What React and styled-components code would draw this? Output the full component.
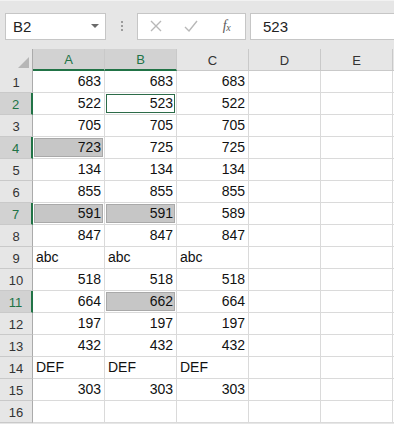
import React from "react";
import styled, { createGlobalStyle, css } from "styled-components";

const Global = createGlobalStyle`
  html, body { margin: 0; padding: 0; background: #e6e6e6; }
  body { font-family: "Liberation Sans", Arial, sans-serif; overflow: hidden; }
`;

const GREEN = "#217346";

const Page = styled.div`
  width: 394px;
  height: 424px;
  background: #e6e6e6;
  overflow: hidden;
  border-top: 1px solid #f2f2f2;
  box-sizing: border-box;
`;

const FormulaBar = styled.div`
  display: flex;
  align-items: center;
  height: 48px;
  padding: 0 0 0 5px;
  box-sizing: border-box;
  gap: 0;
`;

const NameBox = styled.div`
  width: 101px;
  height: 27px;
  margin-top: 2px;
  box-sizing: border-box;
  background: #fff;
  border: 1px solid #c6c6c6;
  display: flex;
  align-items: center;
  justify-content: space-between;
  padding: 0 6px 0 7px;
  font-size: 15px;
  color: #222;
`;

const Caret = styled.span`
  width: 0;
  height: 0;
  border-left: 4px solid transparent;
  border-right: 4px solid transparent;
  border-top: 4px solid #6a6a6a;
`;

const Dots = styled.div`
  width: 31px;
  display: flex;
  flex-direction: column;
  align-items: center;
  gap: 2px;
  margin-top: 2px;
  span {
    width: 2px;
    height: 2px;
    background: #9c9c9c;
  }
`;

const ButtonsBox = styled.div`
  width: 109px;
  height: 27px;
  margin-top: 2px;
  box-sizing: border-box;
  background: #fff;
  border: 1px solid #c6c6c6;
  display: flex;
  align-items: center;
`;

const BarButton = styled.span`
  width: ${(p) => p.$w}px;
  display: flex;
  justify-content: center;
  align-items: center;
  color: ${(p) => p.$color || "#b6b6b6"};
  font-size: 15px;
`;

const Fx = styled.span`
  font-family: "Liberation Serif", "Times New Roman", serif;
  font-style: italic;
  font-size: 14px;
  color: #5a5a5a;
  letter-spacing: -0.5px;
  sub { font-size: 10px; vertical-align: -1px; }
`;

const FormulaInput = styled.div`
  flex: 1;
  height: 27px;
  margin-top: 2px;
  margin-left: 4px;
  box-sizing: border-box;
  background: #fff;
  border: 1px solid #c6c6c6;
  border-right: none;
  display: flex;
  align-items: center;
  padding-left: 12px;
  font-size: 15px;
  color: #222;
`;

const Sheet = styled.div`
  display: grid;
  grid-template-columns: 33px repeat(5, 72px) 1fr;
  grid-auto-rows: 22px;
`;

const Corner = styled.div`
  position: relative;
  background: #e6e6e6;
  border-right: 1px solid #ababab;
  box-sizing: border-box;
  &::after {
    content: "";
    position: absolute;
    right: 3px;
    bottom: 3px;
    width: 0;
    height: 0;
    border-left: 11px solid transparent;
    border-bottom: 11px solid #b6b6b6;
  }
`;

const ColHead = styled.div`
  box-sizing: border-box;
  display: flex;
  align-items: center;
  justify-content: center;
  font-size: 13px;
  padding-top: 1px;
  border-right: 1px solid #c9c9c9;
  border-bottom: 2px solid ${(p) => (p.$sel ? GREEN : "#e6e6e6")};
  background: ${(p) => (p.$sel ? "#d2d2d2" : "#e6e6e6")};
  color: ${(p) => (p.$sel ? GREEN : "#333")};
  ${(p) => !p.$sel && css`border-bottom: 1px solid #c9c9c9;`}
`;

const RowHead = styled.div`
  box-sizing: border-box;
  display: flex;
  align-items: center;
  justify-content: center;
  font-size: 13px;
  padding-top: 1px;
  background: ${(p) => (p.$sel ? "#d2d2d2" : "#e6e6e6")};
  color: ${(p) => (p.$sel ? GREEN : "#333")};
  border-bottom: 1px solid #c9c9c9;
  border-right: ${(p) => (p.$sel ? `2px solid ${GREEN}` : "1px solid #ababab")};
`;

const Cell = styled.div`
  position: relative;
  box-sizing: border-box;
  background: #fff;
  border-right: 1px solid #dadada;
  border-bottom: 1px solid #dadada;
  display: flex;
  align-items: flex-end;
  justify-content: ${(p) => (p.$text ? "flex-start" : "flex-end")};
  padding: 0 3px 3px 3px;
  font-size: 14px;
  color: #111;
  white-space: nowrap;
  overflow: ${(p) => (p.$clip ? "hidden" : "visible")};
  z-index: 0;
  &::before {
    content: "";
    position: absolute;
    inset: 0 0 0 0;
    z-index: -1;
    ${(p) =>
      p.$hl &&
      css`
        background: #c6c6c6;
        box-shadow: inset 0 0 0 1px #a9a9a9;
        inset: 1px 1px 1px 1px;
      `}
    ${(p) =>
      p.$active &&
      css`
        box-shadow: inset 0 0 0 1px #2b6b48;
        inset: 1px 1px 1px 1px;
      `}
  }
`;

const data = [
  [683, 683, 683],
  [522, 523, 522],
  [705, 705, 705],
  [723, 725, 725],
  [134, 134, 134],
  [855, 855, 855],
  [591, 591, 589],
  [847, 847, 847],
  ["abc", "abc", "abc"],
  [518, 518, 518],
  [664, 662, 664],
  [197, 197, 197],
  [432, 432, 432],
  ["DEF", "DEF", "DEF"],
  [303, 303, 303],
  ["", "", ""],
];

const highlighted = new Set(["0-3", "0-6", "1-6", "1-10"]);
const selRows = new Set([1, 3, 6, 10]);

export default function App() {
  return (
    <Page>
      <Global />
      <FormulaBar>
        <NameBox>
          B2
          <Caret />
        </NameBox>
        <Dots>
          <span />
          <span />
          <span />
        </Dots>
        <ButtonsBox>
          <BarButton $w={36}>
            <svg width="12" height="12" viewBox="0 0 12 12">
              <path d="M1 1 L11 11 M11 1 L1 11" stroke="#b8b8b8" strokeWidth="1.4" fill="none" />
            </svg>
          </BarButton>
          <BarButton $w={34}>
            <svg width="14" height="12" viewBox="0 0 14 12">
              <path d="M1 7 L5 11 L13 1" stroke="#b8b8b8" strokeWidth="1.4" fill="none" />
            </svg>
          </BarButton>
          <BarButton $w={37}>
            <Fx>
              f<sub>x</sub>
            </Fx>
          </BarButton>
        </ButtonsBox>
        <FormulaInput>523</FormulaInput>
      </FormulaBar>
      <Sheet>
        <Corner />
        {["A", "B", "C", "D", "E"].map((c, i) => (
          <ColHead key={c} $sel={i < 2}>
            {c}
          </ColHead>
        ))}
        <ColHead />
        {data.map((row, r) => (
          <React.Fragment key={r}>
            <RowHead $sel={selRows.has(r)}>{r + 1}</RowHead>
            {row.map((v, c) => (
              <Cell
                key={c}
                $text={typeof v === "string"}
                $clip={c === 2 && typeof v === "string"}
                $hl={highlighted.has(`${c}-${r}`)}
                $active={r === 1 && c === 1}
              >
                {v}
              </Cell>
            ))}
            <Cell />
            <Cell />
            <Cell />
          </React.Fragment>
        ))}
      </Sheet>
    </Page>
  );
}
